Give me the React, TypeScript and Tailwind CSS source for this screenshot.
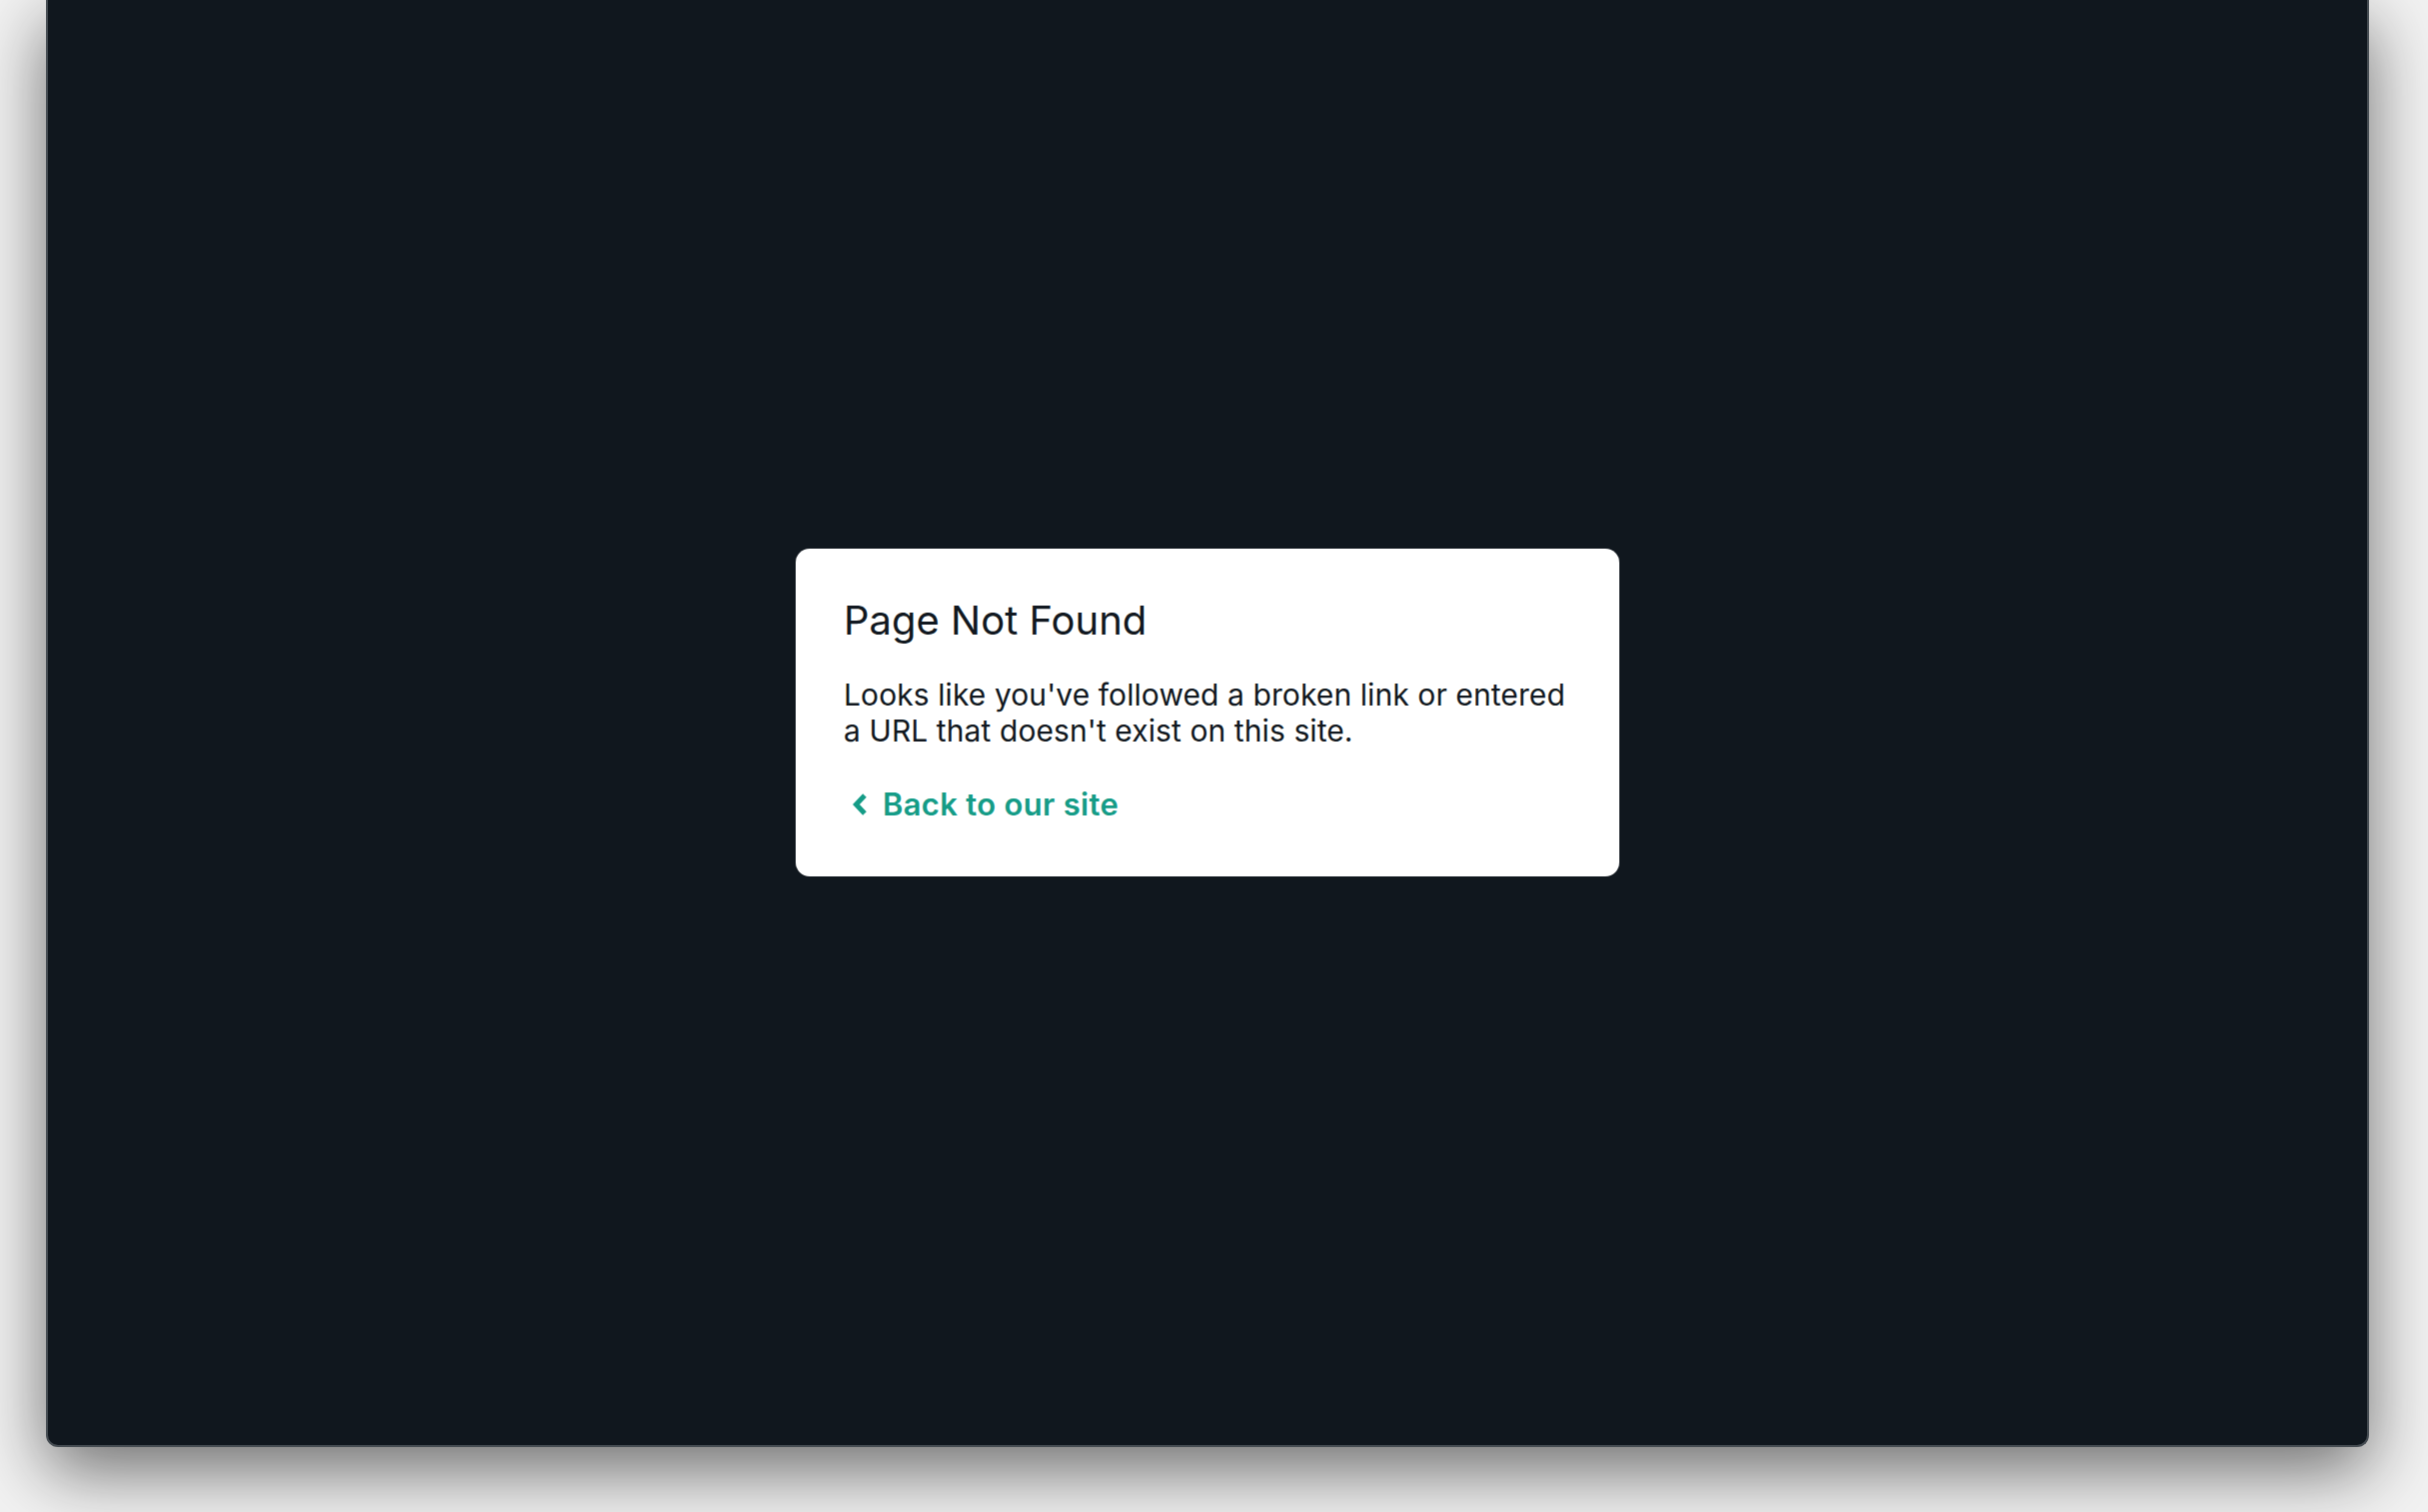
import React from 'react';

export default function App() {
    return (
        <div className="w-[2429px] h-[1513px] bg-[#f2f2f2] overflow-hidden" style={{ fontFamily: 'Inter, "Noto Sans", sans-serif' }}>
            {/* browser window, top cut off */}
            <div className="ml-[46px] w-[2324px] h-[1448px] bg-[#10171e] border-x-2 border-b-2 border-[#454c52] rounded-b-[12px] shadow-[0_24px_70px_rgba(0,0,0,0.55)] flex items-center justify-center pb-[21px]">
                <div className="w-[824px] bg-white rounded-[14px] px-12 pt-12 pb-[54px]">
                    <h1 className="text-[40px] leading-[48px] text-[#111820] font-normal">Page Not Found</h1>
                    <p className="mt-8 text-[30px] leading-[36px] text-[#111820] tracking-[0.003em]">
                        Looks like you've followed a broken link or entered a URL that doesn't exist on this site.
                    </p>
                    <a href="#" className="mt-[38px] flex items-center gap-[15px] text-[31px] leading-[36px] font-semibold text-[#159c87] tracking-[0.01em]">
                        <svg viewBox="0 0 16 22" className="w-[16px] h-[22px] ml-[8px]" fill="none" stroke="currentColor" strokeWidth="5" strokeLinejoin="miter" strokeLinecap="butt">
                            <polyline points="13,2 4.5,11 13,20" />
                        </svg>
                        <span>Back to our site</span>
                    </a>
                </div>
            </div>
        </div>
    );
}
